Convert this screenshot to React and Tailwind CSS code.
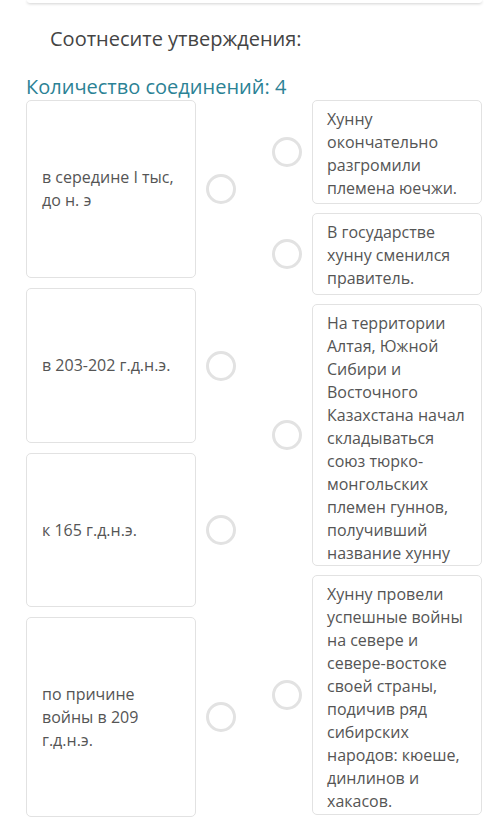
const leftItems = [
  { text: "в середине I тыс, до н. э", h: "h-[178px]" },
  { text: "в 203-202 г.д.н.э.", h: "h-[155px]" },
  { text: "к 165 г.д.н.э.", h: "h-[154px]" },
  { text: "по причине войны в 209 г.д.н.э.", h: "h-[200px]" },
];

const rightItems = [
  { text: "Хунну окончательно разгромили племена юечжи.", h: "h-[104px]" },
  { text: "В государстве хунну сменился правитель.", h: "h-[82px]" },
  {
    text: "На территории Алтая, Южной Сибири и Восточного Казахстана начал складываться союз тюрко-монгольских племен гуннов, получивший название хунну",
    h: "h-[262px]",
  },
  {
    text: "Хунну провели успешные войны на севере и севере-востоке своей страны, подичив ряд сибирских народов: кюеше, динлинов и хакасов.",
    h: "h-[240px]",
  },
];

function Circle() {
  return <div className="w-[30px] h-[30px] shrink-0 rounded-full border-[3px] border-[#e2e2e2] bg-white" />;
}

export default function App() {
  return (
    <div className="w-[500px] min-h-[832px] bg-white font-['Open_Sans',sans-serif] text-[#555]">
      {/* Bottom edge of the previous card */}
      <div className="mx-[27px] mr-[18px] h-[3px] rounded-b-md bg-white shadow-[0_1px_3px_rgba(0,0,0,0.18)]" />

      <h2 className="pl-[50px] pt-[23px] text-[20px] leading-[26px] text-[#444]">
        Соотнесите утверждения:
      </h2>
      <p className="pl-[26px] mt-[22px] text-[20px] leading-[26px] text-[#2b8295]">
        Количество соединений: 4
      </p>

      <div className="flex justify-between pl-[26px] pr-[18px]">
        <div className="flex flex-col gap-[10px]">
          {leftItems.map((item, i) => (
            <div key={i} className="flex items-center gap-[10px]">
              <div
                className={`w-[170px] ${item.h} flex items-center rounded-[5px] border border-[#e2e2e2] px-[15px] text-[16px] leading-[23px]`}
              >
                {item.text}
              </div>
              <Circle />
            </div>
          ))}
        </div>

        <div className="flex flex-col gap-[9px]">
          {rightItems.map((item, i) => (
            <div key={i} className="flex items-center gap-[10px]">
              <Circle />
              <div
                className={`w-[170px] ${item.h} rounded-[5px] border border-[#e2e2e2] pl-[14px] pr-[10px] pt-[7px] text-[16px] leading-[23px]`}
              >
                {item.text}
              </div>
            </div>
          ))}
        </div>
      </div>
    </div>
  );
}
